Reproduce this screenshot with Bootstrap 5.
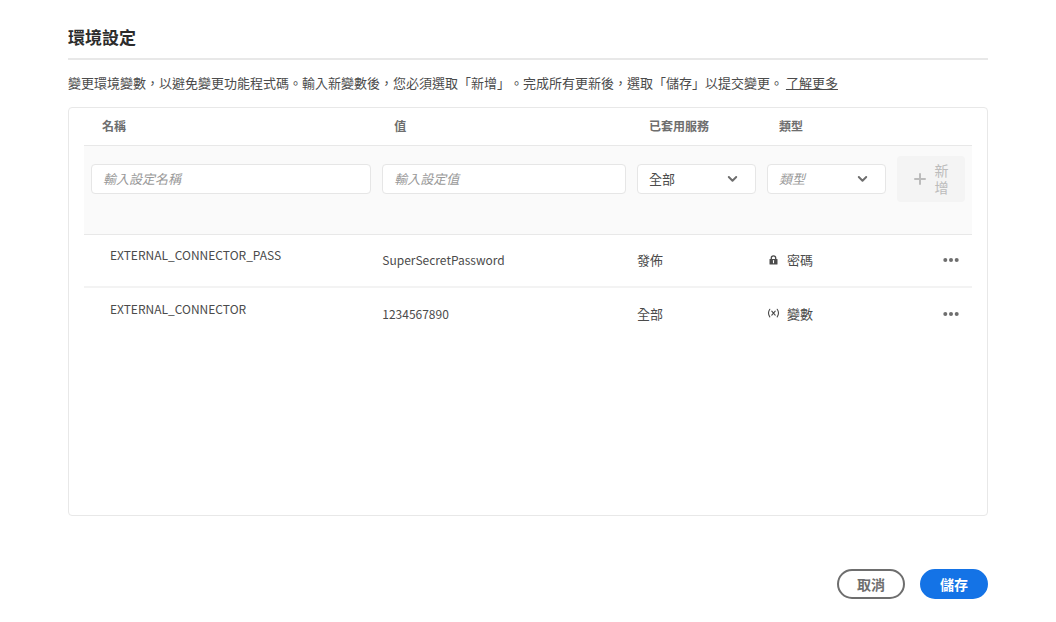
<!DOCTYPE html>
<html lang="zh-Hant">
<head>
<meta charset="utf-8">
<meta name="viewport" content="width=device-width, initial-scale=1">
<title>環境設定</title>
<link href="https://cdn.jsdelivr.net/npm/bootstrap@5.3.0/dist/css/bootstrap.min.css" rel="stylesheet">
<style>
  body { font-family: "Noto Sans CJK TC", sans-serif; font-size: 13px; line-height: 20px; color: #4b4b4b; text-spacing-trim: space-all; }
  .page { padding: 24px 68px 23px; }
  .page-title { font-size: 17px; line-height: 26px; font-weight: 700; color: #2c2c2c; padding-bottom: 8px; border-bottom: 2px solid #e8e8e8; }
  .intro { margin: 13px 0 14px; }
  .intro a { color: inherit; }
  .panel { border: 1px solid #e8e8e8; border-radius: 4px; padding: 0 15px; }
  .env-table { table-layout: fixed; width: 100%; }
  .env-table th, .env-table td { padding: 0 4px 0 7px; vertical-align: middle; }
  .env-table th { height: 37px; padding-left: 18px; font-size: 12px; color: #6e6e6e; border-bottom: 1px solid #e8e8e8; }
  .env-table th:nth-child(n+2) { padding-left: 19px; }
  .env-table td:last-child { padding-right: 7px; }
  .env-table .filters td { height: 89px; padding-top: 10px; vertical-align: top; background: #fafafa; border-bottom: 1px solid #e8e8e8; }
  .env-table .entry td { height: 53px; border-bottom: 2px solid #f3f3f3; }
  .env-table .entry:last-child td { border-bottom: 0; }
  .env-table .entry .entry-name { padding: 0 4px 10px 26px; font-size: 12px; }
  .env-table .entry .entry-value { font-size: 12px; }
  .col-name { width: 32.8%; }
  .col-pick { width: 130px; }
  .col-act { width: 82px; }
  .field { height: 30px; margin-top: 8px; padding: 0 11px; font-size: 13px; line-height: 20px; color: #4b4b4b; border: 1px solid #e6e6e6; border-radius: 4px; background-color: #fff; }
  .field::placeholder, .field.unset { color: #999; font-style: italic; }
  select.field { background-size: 11px 8px; background-position: right 17px center;
    background-image: url("data:image/svg+xml,%3csvg xmlns='http://www.w3.org/2000/svg' viewBox='0 0 11 8'%3e%3cpath d='M1.8 2 5.5 5.7 9.2 2' fill='none' stroke='%236e6e6e' stroke-width='2' stroke-linecap='round' stroke-linejoin='round'/%3e%3c/svg%3e"); }
  .btn-add { width: 100%; height: 46px; padding: 0 16px 0 17px; gap: 8px; font-size: 14px; line-height: 17px; border: 0; border-radius: 4px; }
  .btn-add:disabled { background: #f4f4f4; color: #bcbcbc; opacity: 1; }
  .kind { gap: 7px; }
  .btn-more { padding: 4px 6px; border: 0; }
  .actions { gap: 15px; margin-top: 53px; }
  .btn-pill { min-width: 68px; height: 30px; padding: 0 18px; font-size: 14px; line-height: 26px; font-weight: 700; border-width: 2px; border-radius: 15px; }
  .btn-cancel, .btn-cancel:hover { color: #6e6e6e; border-color: #6e6e6e; background: #fff; }
  .btn-save, .btn-save:hover { color: #fff; border-color: #1473e6; background: #1473e6; }
</style>
</head>
<body>
<main class="page min-vh-100 d-flex flex-column">
  <h1 class="page-title mb-0">環境設定</h1>
  <p class="intro">變更環境變數，以避免變更功能程式碼。輸入新變數後，您必須選取「新增」。完成所有更新後，選取「儲存」以提交變更。 <a href="#">了解更多</a></p>

  <section class="panel flex-grow-1">
    <table class="env-table">
      <colgroup><col class="col-name"><col><col class="col-pick"><col class="col-pick"><col class="col-act"></colgroup>
      <thead>
        <tr><th scope="col">名稱</th><th scope="col">值</th><th scope="col">已套用服務</th><th scope="col">類型</th><th></th></tr>
      </thead>
      <tbody>
        <tr class="filters">
          <td><input class="form-control field" type="text" placeholder="輸入設定名稱" aria-label="名稱"></td>
          <td><input class="form-control field" type="text" placeholder="輸入設定值" aria-label="值"></td>
          <td><select class="form-select field" aria-label="已套用服務"><option>全部</option></select></td>
          <td><select class="form-select field unset" aria-label="類型"><option>類型</option></select></td>
          <td><button class="btn btn-add d-flex align-items-center" type="button" disabled>
            <svg class="flex-shrink-0" width="12" height="12" viewBox="0 0 12 12" fill="none" stroke="currentColor" stroke-width="2" stroke-linecap="round" aria-hidden="true"><path d="M6 1v10M1 6h10"/></svg>
            <span>新增</span></button></td>
        </tr>
        <tr class="entry">
          <td class="entry-name">EXTERNAL_CONNECTOR_PASS</td>
          <td class="entry-value">SuperSecretPassword</td>
          <td>發佈</td>
          <td><div class="kind d-flex align-items-center">
            <svg width="13" height="12" viewBox="0 0 13 12" aria-hidden="true"><path d="M4.300 5V4a2.200 2.200 0 0 1 4.400 0V5" fill="none" stroke="#4b4b4b" stroke-width="1.300"/><rect x="2.500" y="4.900" width="8" height="5.600" rx=".6" fill="#4b4b4b"/><path d="M6.500 6.500v2.200" stroke="#fff" stroke-width="1.100" stroke-linecap="round"/></svg>
            <span>密碼</span></div></td>
          <td><button class="btn btn-more d-flex ms-auto" type="button" aria-label="更多動作"><svg width="16" height="6" viewBox="0 0 16 6" fill="#6e6e6e" aria-hidden="true"><circle cx="2.3" cy="3" r="2"/><circle cx="8" cy="3" r="2"/><circle cx="13.7" cy="3" r="2"/></svg></button></td>
        </tr>
        <tr class="entry">
          <td class="entry-name">EXTERNAL_CONNECTOR</td>
          <td class="entry-value">1234567890</td>
          <td>全部</td>
          <td><div class="kind d-flex align-items-center">
            <svg width="13" height="12" viewBox="0 0 13 12" fill="none" stroke="#4b4b4b" stroke-width="1.1" stroke-linecap="round" aria-hidden="true"><path d="M2.800 1.300Q.2 5 2.800 8.900M10.200 1.300q2.600 3.700 0 7.600M4.800 3.200l3.400 3.900M8.200 3.200 4.800 7.100"/></svg>
            <span>變數</span></div></td>
          <td><button class="btn btn-more d-flex ms-auto" type="button" aria-label="更多動作"><svg width="16" height="6" viewBox="0 0 16 6" fill="#6e6e6e" aria-hidden="true"><circle cx="2.3" cy="3" r="2"/><circle cx="8" cy="3" r="2"/><circle cx="13.7" cy="3" r="2"/></svg></button></td>
        </tr>
      </tbody>
    </table>
  </section>

  <div class="actions d-flex justify-content-end">
    <button class="btn btn-pill btn-cancel" type="button">取消</button>
    <button class="btn btn-pill btn-save" type="button">儲存</button>
  </div>
</main>
<script src="https://cdn.jsdelivr.net/npm/bootstrap@5.3.0/dist/js/bootstrap.bundle.min.js"></script>
</body>
</html>
